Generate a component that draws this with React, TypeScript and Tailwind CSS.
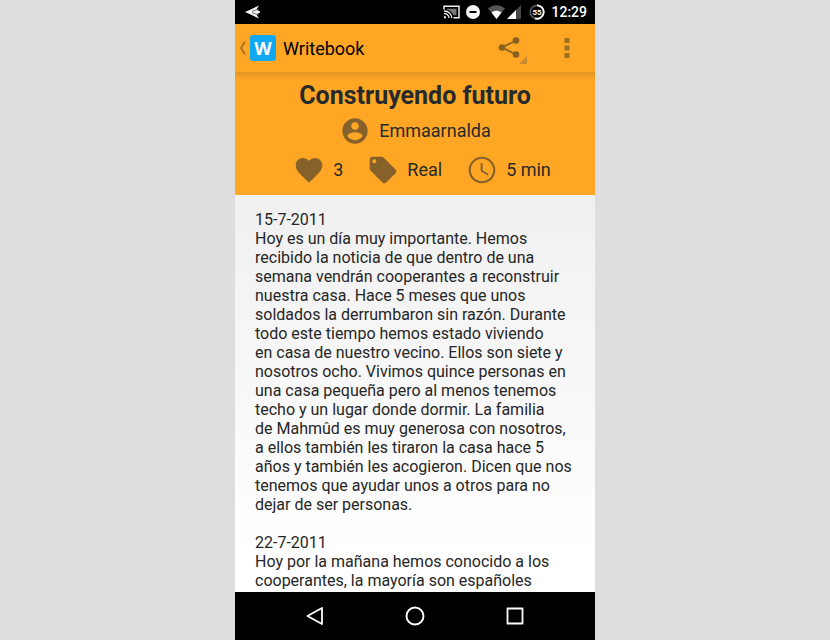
import React from "react";

const paragraphs = [
  {
    date: "15-7-2011",
    text:
      "Hoy es un día muy importante. Hemos recibido la noticia de que dentro de una semana vendrán cooperantes a reconstruir nuestra casa. Hace 5 meses que unos soldados la derrumbaron sin razón. Durante todo este tiempo hemos estado viviendo en\u00a0casa de nuestro vecino. Ellos son siete y nosotros ocho. Vivimos quince personas en una casa pequeña pero al menos tenemos techo y un lugar donde dormir. La familia de\u00a0Mahmûd es muy generosa con nosotros, a ellos también les tiraron la casa hace 5 años y también les acogieron. Dicen que nos tenemos que ayudar unos a otros para no dejar de ser personas.",
  },
  {
    date: "22-7-2011",
    text: "Hoy por la mañana hemos conocido a los cooperantes, la mayoría son españoles",
  },
];

function StatusBar() {
  return (
    <div className="flex h-6 shrink-0 items-center bg-black pr-2 pl-2.5 text-white">
      <svg width="16" height="14" viewBox="0 0 16 14" aria-hidden="true">
        <path d="M0 7 14 0.500 11.500 4.600 15 6.400V7.600L11.500 9.400 14 13.500Z" fill="#f2f2f2" />
        <path d="M7 6.300 14 4.200M7 7.700 14 9.800" stroke="#555" strokeWidth="0.8" />
      </svg>
      <svg className="ml-auto" width="17" height="14" viewBox="0 0 17 14" fill="none" aria-hidden="true">
        <path d="M1 4.500V1.200h15v11.600h-5.500" stroke="#eee" strokeWidth="1.500" />
        <path d="M1 6a7.500 7 0 0 1 7.800 7M1 8.600a4.600 4.400 0 0 1 5 4.400" stroke="#eee" strokeWidth="1.300" />
        <path d="M1 11a2 2 0 0 1 2.200 2.200H1Z" fill="#eee" />
        <path d="M4 3.800h9.500v6.500h-3C9 7.500 7 5.500 4 4.800Z" fill="#777" />
      </svg>
      <svg className="ml-1.5" width="14" height="14" viewBox="0 0 14 14" aria-hidden="true">
        <circle cx="7" cy="7" r="7" fill="#f4f4f4" />
        <path d="M3.500 7h7" stroke="#000" strokeWidth="2" />
      </svg>
      <svg className="ml-2" width="17" height="14" viewBox="0 0 17 14" aria-hidden="true">
        <path d="M0 3.500C5-1 12-1 17 3.500L8.500 14Z" fill="#555" />
        <path d="M3.500 7.500C6.500 5 10.500 5 13.500 7.500L8.500 14Z" fill="#fff" />
      </svg>
      <svg className="ml-0.5" width="14" height="14" viewBox="0 0 14 14" aria-hidden="true">
        <path d="M0 14 14 0v14Z" fill="#484848" />
        <path d="M0 14 9 5v9Z" fill="#fff" />
      </svg>
      <svg className="ml-2" width="16" height="16" viewBox="0 0 16 16" aria-hidden="true">
        <circle cx="8" cy="8" r="6.700" fill="none" stroke="#555" strokeWidth="1.800" />
        <path d="M8 1.300a6.700 6.700 0 1 1-2 13.100" fill="none" stroke="#fff" strokeWidth="1.800" />
        <text x="8" y="10.800" textAnchor="middle" fontSize="8" fontWeight="700" fontFamily="Roboto, sans-serif" fill="#fff">
          55
        </text>
      </svg>
      <span className="ml-1.5 text-sm font-medium">12:29</span>
    </div>
  );
}

function ActionBar() {
  return (
    <header className="flex h-12 shrink-0 items-center bg-[#ffa724] pl-1">
      <button aria-label="Volver" className="flex items-center">
        <svg width="7" height="14" viewBox="0 0 7 14" fill="none" aria-hidden="true">
          <path d="M6 0.500 2 7l4 6.500" stroke="#ad7420" strokeWidth="2" />
        </svg>
        <span className="ml-1 flex size-[26px] items-center justify-center rounded-[3px] bg-[#0fa9f2] font-['Open_Sans',sans-serif] text-lg font-bold text-white">
          W
        </span>
      </button>
      <h1 className="ml-[7px] pt-px text-lg text-black">Writebook</h1>
      <button aria-label="Compartir" className="mr-[37px] ml-auto">
        <svg width="30" height="32" viewBox="0 0 30 32" aria-hidden="true">
          <path d="M19 8.500 5 15.500l14 7" fill="none" stroke="#86611f" strokeWidth="1.800" />
          <g fill="#86611f">
            <circle cx="19" cy="8.500" r="3.300" />
            <circle cx="5" cy="15.500" r="3.300" />
            <circle cx="19" cy="22.500" r="3.300" />
          </g>
          <path d="M30 24v8h-8Z" fill="#c98a2a" />
        </svg>
      </button>
      <button aria-label="Más opciones" className="mr-[25px]">
        <svg width="6" height="20" viewBox="0 0 6 20" fill="#a06f1e" aria-hidden="true">
          <path d="M0.500 0h5v5h-5zM0.500 7.500h5v5h-5zM0.500 15h5v5h-5z" />
        </svg>
      </button>
    </header>
  );
}

function Icon({ d }: { d: string }) {
  return (
    <svg className="size-8" viewBox="0 0 24 24" fill="#86622a" aria-hidden="true">
      <path d={d} />
    </svg>
  );
}

const heart =
  "M12 21.350l-1.450-1.320C5.400 15.360 2 12.280 2 8.500 2 5.420 4.420 3 7.500 3c1.740 0 3.410.81 4.500 2.090C13.090 3.810 14.760 3 16.500 3 19.580 3 22 5.420 22 8.500c0 3.780-3.400 6.860-8.550 11.540L12 21.350z";
const tag =
  "M21.410 11.580l-9-9C12.050 2.220 11.550 2 11 2H4c-1.100 0-2 .9-2 2v7c0 .55.220 1.050.590 1.420l9 9c.360.360.860.580 1.410.580.550 0 1.050-.220 1.410-.590l7-7c.370-.360.590-.860.590-1.410 0-.550-.230-1.060-.590-1.420zM5.500 7C4.670 7 4 6.330 4 5.500S4.670 4 5.500 4 7 4.670 7 5.500 6.330 7 5.500 7z";
const clock =
  "M11.990 2C6.470 2 2 6.480 2 12s4.470 10 9.990 10C17.520 22 22 17.520 22 12S17.520 2 11.990 2zM12 20.400c-4.640 0-8.400-3.760-8.400-8.400s3.760-8.400 8.400-8.400 8.400 3.760 8.400 8.400-3.760 8.400-8.400 8.400zM12.500 7H11v6l5.250 3.150.750-1.230-4.500-2.670z";
const account =
  "M12 2.500C6.760 2.500 2.500 6.760 2.500 12s4.260 9.500 9.500 9.500 9.500-4.260 9.500-9.500S17.240 2.500 12 2.500zm0 2.850c1.580 0 2.850 1.270 2.850 2.850s-1.270 2.850-2.850 2.850-2.850-1.270-2.850-2.850S10.420 5.350 12 5.350zm0 13.500c-2.380 0-4.480-1.220-5.700-3.060.030-1.890 3.800-2.930 5.700-2.930s5.670 1.040 5.700 2.930c-1.220 1.840-3.320 3.060-5.700 3.060z";

function StoryHeader() {
  return (
    <section className="shrink-0 bg-[#ffa724] text-lg text-[#262a2b]">
      <div className="h-2 bg-linear-to-b from-[#e29524] to-[#ffa724]" />
      <h2 className="text-center text-[25px] leading-8 font-bold">Construyendo futuro</h2>
      <p className="mt-[3px] flex items-center justify-center gap-2">
        <Icon d={account} />
        Emmaarnalda
      </p>
      <ul className="flex items-center justify-center gap-6 pt-[7px] pb-[9px] pl-[14px]">
        <li className="flex items-center gap-2"><Icon d={heart} />3</li>
        <li className="flex items-center gap-2"><Icon d={tag} />Real</li>
        <li className="flex items-center gap-2"><Icon d={clock} />5 min</li>
      </ul>
    </section>
  );
}

function NavBar() {
  return (
    <nav className="grid h-12 shrink-0 grid-cols-[1fr_100px_100px_100px_1fr] items-center bg-black">
      <button aria-label="Atrás" className="col-start-2 flex justify-center">
        <svg width="20" height="20" viewBox="0 0 20 20" fill="none" stroke="#fff" strokeWidth="1.800" strokeLinejoin="round" aria-hidden="true">
          <path d="M17 2v16L2.500 10Z" />
        </svg>
      </button>
      <button aria-label="Inicio" className="flex justify-center">
        <svg width="20" height="20" viewBox="0 0 20 20" fill="none" stroke="#fff" strokeWidth="1.900" aria-hidden="true">
          <circle cx="10" cy="10" r="8.500" />
        </svg>
      </button>
      <button aria-label="Recientes" className="flex justify-center">
        <svg width="20" height="20" viewBox="0 0 20 20" fill="none" stroke="#fff" strokeWidth="1.800" strokeLinejoin="round" aria-hidden="true">
          <path d="M2.500 2.500h15v15h-15z" />
        </svg>
      </button>
    </nav>
  );
}

export default function App() {
  return (
    <div className="flex h-screen justify-center bg-[#dedede] font-[Roboto,sans-serif]">
      <div className="flex w-full max-w-[360px] flex-col">
        <StatusBar />
        <ActionBar />
        <StoryHeader />
        <main className="min-h-0 flex-1 overflow-hidden bg-linear-to-b from-[#f0f0f0] to-white to-90% px-5 pt-[15px] text-base leading-[19px] text-[#262626]">
          {paragraphs.map((p) => (
            <article key={p.date} className="mb-[19px]">
              <h3>{p.date}</h3>
              <p>{p.text}</p>
            </article>
          ))}
        </main>
        <NavBar />
      </div>
    </div>
  );
}
